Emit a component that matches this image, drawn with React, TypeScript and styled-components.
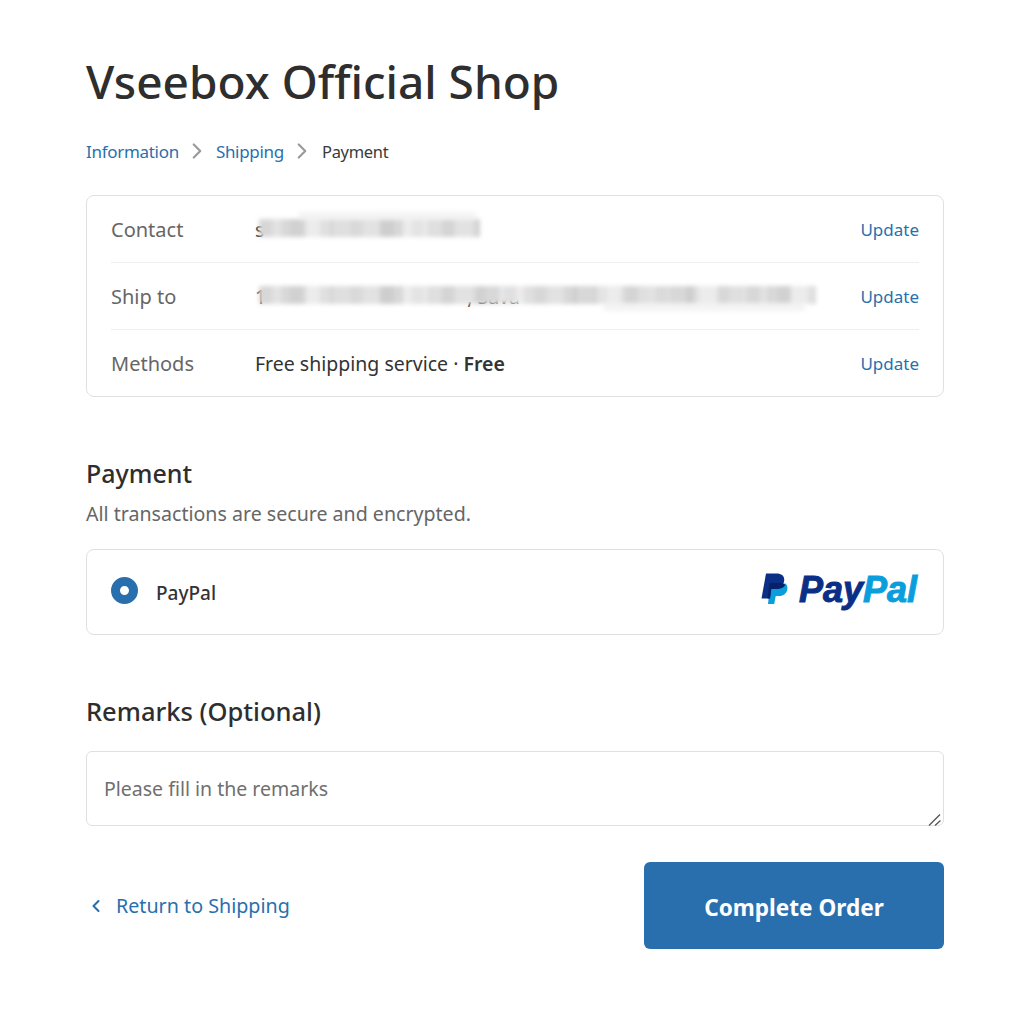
import styled, { createGlobalStyle } from 'styled-components';
import { ChevronLeft, ChevronRight } from 'lucide-react';

const GlobalStyle = createGlobalStyle`
  * {
    box-sizing: border-box;
  }
  body {
    margin: 0;
    background: #fff;
    font-family: 'Noto Sans', 'Open Sans', 'Liberation Sans', sans-serif;
    color: #333;
  }
`;

const summaryData = [
  { label: 'Contact', kind: 'contact' },
  { label: 'Ship to', kind: 'address' },
  { label: 'Methods', kind: 'method' },
];

const App = () => {
  return (
    <Page>
      <GlobalStyle />
      <ShopTitle>Vseebox Official Shop</ShopTitle>
      <Breadcrumb>
        <CrumbLink>Information</CrumbLink>
        <ChevronRight size={26} color="#9a9a9a" strokeWidth={2} />
        <CrumbLink>Shipping</CrumbLink>
        <ChevronRight size={26} color="#9a9a9a" strokeWidth={2} />
        <CrumbCurrent>Payment</CrumbCurrent>
      </Breadcrumb>

      <SummaryCard>
        {summaryData.map((item) => (
          <SummaryRow key={item.label}>
            <RowLabel>{item.label}</RowLabel>
            <RowValue>
              {item.kind === 'contact' && (
                <>
                  s<Smudge $left={4} $width={221} />
                </>
              )}
              {item.kind === 'address' && (
                <>
                  1<AddressTail>, Sava</AddressTail>
                  <Smudge $left={4} $width={557} $low />
                </>
              )}
              {item.kind === 'method' && (
                <>
                  Free shipping service · <strong>Free</strong>
                </>
              )}
            </RowValue>
            <UpdateLink>Update</UpdateLink>
          </SummaryRow>
        ))}
      </SummaryCard>

      <SectionTitle>Payment</SectionTitle>
      <SectionNote>All transactions are secure and encrypted.</SectionNote>
      <PayCard>
        <Radio />
        <PayName>PayPal</PayName>
        <PayLogo>
          <LogoMark width="27" height="32" viewBox="0 0 27 32">
            <path
              fill="#0a9fdc"
              d="M7 31h6.200l1.500-8h3.500c4.200 0 7.300-2.500 8.100-6.500.5-2.600-.3-4.700-2-5.900L9 12z"
            />
            <path
              fill="#0b2f86"
              d="M5 .5h10.500c5.400 0 8.500 2.800 7.600 7.800-.9 5-4.500 7.700-9.300 7.700h-3.500L9 25.500H.5z"
            />
            <path
              fill="#08206a"
              d="M8.500 10h11.500c1.800.3 3.300 1 4.300 2-1.300 2.600-4.500 4-8.500 4h-5.500L9 25.500H6.500z"
            />
          </LogoMark>
          <LogoWord>
            Pay<LogoAccent>Pal</LogoAccent>
          </LogoWord>
        </PayLogo>
      </PayCard>

      <RemarksTitle>Remarks (Optional)</RemarksTitle>
      <RemarksBox>
        <RemarksInput placeholder="Please fill in the remarks" />
        <ResizeGrip width="15" height="14" viewBox="0 0 15 14">
          <path d="M1 13.500 12 2.500M7 13.500l5.500-5" stroke="#555" strokeWidth="1.300" fill="none" />
        </ResizeGrip>
      </RemarksBox>

      <Footer>
        <BackLink>
          <ChevronLeft size={20} strokeWidth={2.5} />
          <span>Return to Shipping</span>
        </BackLink>
        <CompleteButton>Complete Order</CompleteButton>
      </Footer>
    </Page>
  );
};

const Page = styled.div`
  width: 858px;
  margin-left: 86px;
  padding-top: 46px;
  display: flex;
  flex-direction: column;
`;

const ShopTitle = styled.h1`
  margin: 0;
  font-size: 46px;
  font-weight: 500;
  line-height: 70px;
  color: #2e2e2e;
`;

const Breadcrumb = styled.div`
  display: flex;
  align-items: center;
  gap: 5.5px;
  height: 28px;
  margin-top: 21px;
  font-size: 17px;
  letter-spacing: -0.3px;
`;

const CrumbLink = styled.span`
  color: #2a6fad;
`;

const CrumbCurrent = styled.span`
  color: #3a3a3a;
  margin-left: 1px;
  font-size: 16.500px;
`;

const SummaryCard = styled.div`
  margin-top: 30px;
  height: 202px;
  border: 1px solid #e0e0e0;
  border-radius: 8px;
  padding: 0 24px;
`;

const SummaryRow = styled.div`
  display: flex;
  align-items: center;
  height: 67px;
  border-bottom: 1px solid #eeeeee;

  &:last-child {
    border-bottom: none;
  }
`;

const RowLabel = styled.div`
  width: 144px;
  font-size: 20px;
  color: #666;
`;

const RowValue = styled.div`
  position: relative;
  flex: 1;
  display: flex;
  align-items: center;
  white-space: pre;
  font-size: 19.500px;
  color: #333;

  strong {
    font-weight: 600;
  }
`;

const AddressTail = styled.span`
  margin-left: 201px;
  color: #333;
`;

const Smudge = styled.span<{ $left: number; $width: number; $low?: boolean }>`
  position: absolute;
  left: ${(props) => props.$left}px;
  top: 50%;
  width: ${(props) => props.$width}px;
  height: 18px;
  margin-top: -10px;
  background:
    repeating-linear-gradient(
      90deg,
      rgba(120, 120, 120, 0.1) 0 13px,
      transparent 13px 31px,
      rgba(120, 120, 120, 0.07) 31px 43px,
      transparent 43px 61px
    ),
    repeating-linear-gradient(90deg, #e2e2e2 0 23px, #d8d8d8 23px 47px, #ececec 47px 71px, #dfdfdf 71px 97px);
  filter: blur(2px);

  &::after {
    content: '';
    position: absolute;
    left: ${(props) => (props.$low ? '62%' : '18%')};
    right: 2%;
    height: 8px;
    top: ${(props) => (props.$low ? '17px' : '-7px')};
    background: #f3f3f3;
  }
`;

const UpdateLink = styled.span`
  font-size: 17px;
  color: #2a6fad;
`;

const SectionTitle = styled.h2`
  margin: 57px 0 0;
  font-size: 25px;
  font-weight: 500;
  line-height: 38px;
  color: #2e2e2e;
`;

const SectionNote = styled.div`
  margin-top: 8px;
  font-size: 19.600px;
  line-height: 28px;
  color: #666;
`;

const PayCard = styled.div`
  display: flex;
  align-items: center;
  margin-top: 21px;
  height: 86px;
  padding: 0 26px 0 24px;
  border: 1px solid #e0e0e0;
  border-radius: 8px;
`;

const Radio = styled.span`
  width: 27px;
  height: 27px;
  margin-top: -4px;
  border-radius: 50%;
  border: 9px solid #2a6fad;
  background: #fff;
`;

const PayName = styled.span`
  margin-left: 18px;
  font-size: 19px;
  font-weight: 500;
  line-height: 26px;
  color: #333;
  transform: translateY(1px);
`;

const PayLogo = styled.div`
  margin-left: auto;
  display: flex;
  align-items: center;
  gap: 11px;
  margin-top: -5px;
`;

const LogoMark = styled.svg`
  margin-bottom: 2px;
`;

const LogoWord = styled.span`
  font-family: 'Liberation Sans', Arial, sans-serif;
  font-size: 36px;
  font-style: italic;
  font-weight: 700;
  line-height: 40px;
  color: #0b2f86;
  -webkit-text-stroke: 1px currentColor;
`;

const LogoAccent = styled.span`
  color: #0a9fdc;
`;

const RemarksTitle = styled.h2`
  margin: 57px 0 0;
  font-size: 25.500px;
  font-weight: 500;
  line-height: 38px;
  color: #2e2e2e;
`;

const RemarksBox = styled.div`
  position: relative;
  margin-top: 21px;
  height: 75px;
`;

const RemarksInput = styled.textarea`
  display: block;
  width: 100%;
  height: 75px;
  padding: 23px 17px 0;
  border: 1px solid #e0e0e0;
  border-radius: 6px;
  font-family: inherit;
  font-size: 19.500px;
  line-height: 28px;
  outline: none;
  resize: none;

  &::placeholder {
    color: #6f6f6f;
    opacity: 1;
  }
`;

const ResizeGrip = styled.svg`
  position: absolute;
  right: 1px;
  bottom: 0;
`;

const Footer = styled.div`
  display: flex;
  align-items: center;
  justify-content: space-between;
  margin-top: 36px;
`;

const BackLink = styled.div`
  display: flex;
  align-items: center;
  gap: 10px;
  font-size: 19.700px;
  color: #2a6fad;
`;

const CompleteButton = styled.button`
  width: 300px;
  height: 87px;
  padding: 3px 0 0;
  border: none;
  border-radius: 6px;
  background: #2a6fad;
  color: #fff;
  font-family: inherit;
  font-size: 22.600px;
  font-weight: 700;
`;

export default App;
